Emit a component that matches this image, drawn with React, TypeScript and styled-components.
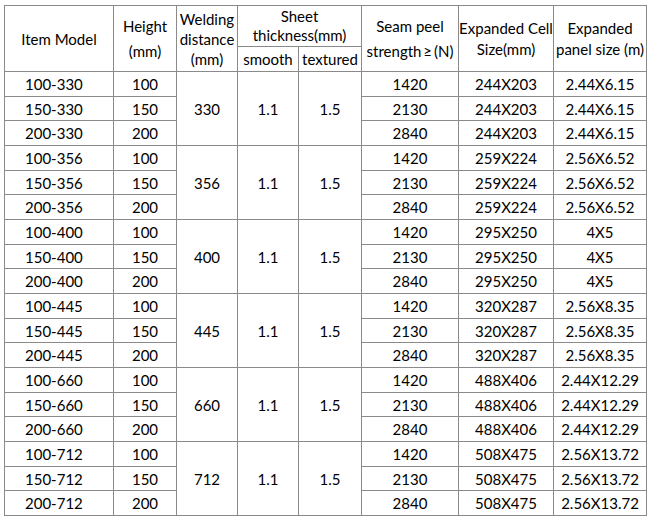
import React from 'react';
import styled, { createGlobalStyle } from 'styled-components';

const GlobalStyle = createGlobalStyle`
    html, body {
        margin: 0;
        padding: 0;
        background: #ffffff;
    }
`;

const Page = styled.div`
    padding: 5px 4px;
    font-family: Lato, "Open Sans", sans-serif;
    font-size: 15px;
    color: #000;
`;

const Table = styled.table`
    border-collapse: collapse;
    table-layout: fixed;
    width: 642px;
    border: 1px solid #6f6f6f;
`;

const HeadCell = styled.th<{ $lh?: number; $h?: number }>`
    font-weight: normal;
    text-align: center;
    vertical-align: middle;
    padding: 0;
    height: ${p => p.$h || 24}px;
    line-height: ${p => p.$lh || 20}px;
    border: 1px solid #8a8a8a;
    white-space: nowrap;
`;

const Cell = styled.td<{ $left?: boolean; $h?: number }>`
    text-align: ${p => (p.$left ? 'left' : 'center')};
    padding: 0 0 0 ${p => (p.$left ? '20px' : '0')};
    vertical-align: middle;
    height: ${p => p.$h || 23}px;
    line-height: 18px;
    border: 1px solid #8a8a8a;
    white-space: nowrap;
`;

type Group = {
    dist: string,
    cell: string,
    panel: string,
};

const groups: Group[] = [
    { dist: '330', cell: '244X203', panel: '2.44X6.15' },
    { dist: '356', cell: '259X224', panel: '2.56X6.52' },
    { dist: '400', cell: '295X250', panel: '4X5' },
    { dist: '445', cell: '320X287', panel: '2.56X8.35' },
    { dist: '660', cell: '488X406', panel: '2.44X12.29' },
    { dist: '712', cell: '508X475', panel: '2.56X13.72' },
];

const heights = ['100', '150', '200'];
const peel = ['1420', '2130', '2840'];
const rowH = [24, 23, 24];

const App: React.FC = () => {
    return <>
        <GlobalStyle />
        <Page>
            <Table>
                <colgroup>
                    <col style={{ width: 109 }} />
                    <col style={{ width: 63 }} />
                    <col style={{ width: 61 }} />
                    <col style={{ width: 61 }} />
                    <col style={{ width: 63 }} />
                    <col style={{ width: 97 }} />
                    <col style={{ width: 95 }} />
                    <col style={{ width: 93 }} />
                </colgroup>
                <thead>
                    <tr>
                        <HeadCell rowSpan={2} $h={40}>Item Model</HeadCell>
                        <HeadCell rowSpan={2} $h={40} $lh={25}>Height<br />(mm)</HeadCell>
                        <HeadCell rowSpan={2} $h={40}>Welding<br />distance<br />(mm)</HeadCell>
                        <HeadCell colSpan={2} $h={40} $lh={19}>Sheet<br />thickness(mm)</HeadCell>
                        <HeadCell rowSpan={2} $h={40} $lh={25}>Seam peel<br />strength{'\u2009≥\u2009'}(N)</HeadCell>
                        <HeadCell rowSpan={2} $h={40} $lh={21}>Expanded Cell<br />Size(mm)</HeadCell>
                        <HeadCell rowSpan={2} $h={40} $lh={21}>Expanded<br />panel size (m)</HeadCell>
                    </tr>
                    <tr>
                        <HeadCell>smooth</HeadCell>
                        <HeadCell>textured</HeadCell>
                    </tr>
                </thead>
                <tbody>
                    {groups.map(g => heights.map((h, i) => (
                        <tr key={g.dist + h}>
                            <Cell $left $h={rowH[i]}>{h}-{g.dist}</Cell>
                            <Cell $h={rowH[i]}>{h}</Cell>
                            {i === 0 && <>
                                <Cell rowSpan={3}>{g.dist}</Cell>
                                <Cell rowSpan={3}>1.1</Cell>
                                <Cell rowSpan={3}>1.5</Cell>
                            </>}
                            <Cell $h={rowH[i]}>{peel[i]}</Cell>
                            <Cell $h={rowH[i]}>{g.cell}</Cell>
                            <Cell $h={rowH[i]}>{g.panel}</Cell>
                        </tr>
                    )))}
                </tbody>
            </Table>
        </Page>
    </>;
};

export default App;
